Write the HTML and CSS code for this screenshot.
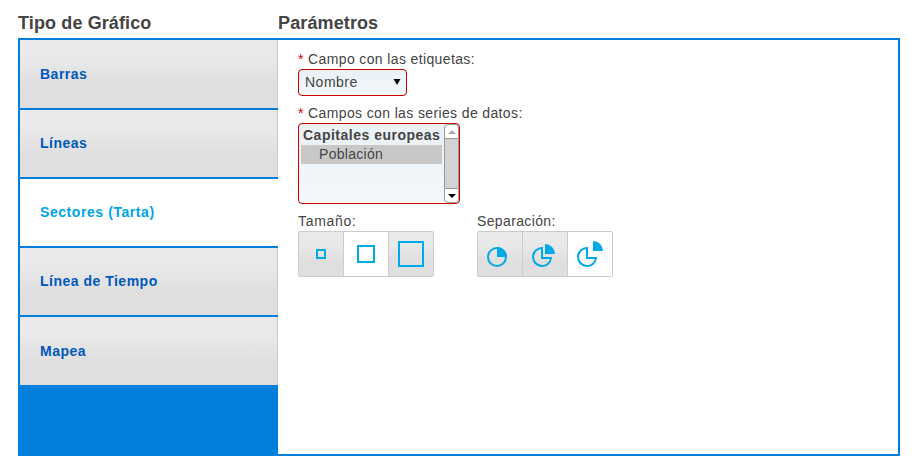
FILE: index.html
```html
<!DOCTYPE html>
<html lang="es">
<head>
<meta charset="utf-8">
<title>Tipo de Gráfico</title>
<link rel="stylesheet" href="styles.css">
</head>
<body>
<header class="headings">
  <h2>Tipo de Gráfico</h2>
  <h2>Parámetros</h2>
</header>
<main class="panel">
  <nav class="types">
    <a class="type type-tall">Barras</a>
    <a class="type">Líneas</a>
    <a class="type active">Sectores (Tarta)</a>
    <a class="type">Línea de Tiempo</a>
    <a class="type type-tall">Mapea</a>
  </nav>
  <section class="params">
    <div class="label"><span class="req">*</span> Campo con las etiquetas:</div>
    <div class="select"><span>Nombre</span><svg width="8" height="6" viewBox="0 0 8 6"><path d="M.5 0h7L4 6z"/></svg></div>
    <div class="label second"><span class="req">*</span> Campos con las series de datos:</div>
    <div class="listbox">
      <div class="options">
        <div class="group">Capitales europeas</div>
        <div class="option">Población</div>
      </div>
      <div class="scrollbar">
        <div class="arrow up"><svg width="8" height="4" viewBox="0 0 8 4"><path d="M0 4h8L4 0z" fill="#aaa"/></svg></div>
        <div class="track"></div>
        <div class="arrow down"><svg width="8" height="4" viewBox="0 0 8 4"><path d="M0 0h8L4 4z"/></svg></div>
      </div>
    </div>
    <div class="choices">
      <div class="choice">
        <div class="label size-label">Tamaño:</div>
        <div class="buttons">
          <span class="button"><i class="square small"></i></span>
          <span class="button on"><i class="square medium"></i></span>
          <span class="button"><i class="square large"></i></span>
        </div>
      </div>
      <div class="choice">
        <div class="label">Separación:</div>
        <div class="buttons">
          <span class="button"><svg class="pie" width="44" height="44" viewBox="0 0 44 44"><circle cx="19" cy="25" r="9"/><path class="wedge" d="M19 25V15a10 10 0 0 1 10 10z"/></svg></span>
          <span class="button"><svg class="pie" width="44" height="44" viewBox="0 0 44 44"><path d="M19 16a9 9 0 1 0 9 10H19z"/><path class="wedge" d="M22 22V12a10 10 0 0 1 10 10z"/></svg></span>
          <span class="button on"><svg class="pie" width="44" height="44" viewBox="0 0 44 44"><path d="M19 16a9 9 0 1 0 9 10H19z"/><path class="wedge" d="M25 19V9a10 10 0 0 1 10 10z"/></svg></span>
        </div>
      </div>
    </div>
  </section>
</main>
</body>
</html>
```
FILE: styles.css
```css
* { box-sizing: border-box; }
body {
  margin: 0;
  padding: 12px 20px 0 18px;
  background: #fff;
  color: #444;
  font: 14px/18px "Liberation Sans", Arial, sans-serif;
  letter-spacing: .5px;
}
.headings {
  display: grid;
  grid-template-columns: 260px 1fr;
  height: 26px;
}
h2 {
  margin: 0;
  font-size: 18px;
  line-height: 22px;
  letter-spacing: .12px;
}
.panel {
  display: flex;
  height: 418px;
  border: 2px solid #027fdb;
}
.types {
  display: flex;
  flex-direction: column;
  gap: 2px;
  width: 258px;
  background: #027fdb;
}
.type {
  display: flex;
  align-items: center;
  height: 67px;
  padding: 0 0 2px 20px;
  border-right: 1px solid #ccc;
  background: linear-gradient(#e9e9e9 28%, #dfdfdf 65%);
  color: #0058bd;
  font-weight: bold;
}
.type-tall { height: 68px; padding-bottom: 0; }
.type.active {
  border-color: #fff;
  background: #fff;
  color: #00a5e5;
  letter-spacing: .57px;
}
.params { padding: 10px 20px; }
.label { height: 19px; letter-spacing: .37px; }
.size-label { letter-spacing: .7px; }
.req { color: #d00000; }
.select {
  display: flex;
  align-items: center;
  justify-content: space-between;
  width: 109px;
  height: 27px;
  padding: 0 5px 2px 6px;
  border: 1px solid #cb0000;
  border-radius: 4px;
  background: linear-gradient(#e9f1f6, #f4f8fb);
}
.second { margin-top: 8px; }
.listbox {
  display: flex;
  width: 162px;
  height: 81px;
  border: 1px solid #cb0000;
  border-radius: 4px;
  background: linear-gradient(#e9f1f6, #f4f8fb);
}
.options { width: 145px; padding: 2px; }
.group { height: 19px; padding-left: 2px; font-weight: bold; white-space: nowrap; }
.option { height: 19px; padding-left: 18px; background: #c8c8c8; letter-spacing: .3px; }
.scrollbar {
  display: flex;
  flex-direction: column;
  width: 15px;
}
.arrow {
  display: flex;
  align-items: center;
  justify-content: center;
  height: 15px;
  border: 1px solid #999;
  background: #fff;
}
.up { border-radius: 4px 4px 0 0; }
.down { border-radius: 0 0 4px 4px; }
.track {
  flex: 1;
  border: solid #999;
  border-width: 0 1px;
  background: #d3d3d3;
}
.choices { display: flex; gap: 43px; margin-top: 8px; }
.buttons {
  display: flex;
  width: 136px;
  height: 46px;
  border: 1px solid #ccc;
  border-radius: 2px;
}
.button {
  display: flex;
  align-items: center;
  justify-content: center;
  width: 45px;
  height: 44px;
  border-right: 1px solid #ccc;
  background: linear-gradient(#e9e9e9 28%, #dfdfdf 65%);
}
.button:last-child { width: 44px; border-right: 0; }
.button.on { background: #fff; }
.square { border: 2px solid #00a9e8; }
.small { width: 10px; height: 10px; }
.medium { width: 18px; height: 18px; }
.large { width: 26px; height: 26px; }
.pie { fill: none; stroke: #00a9e8; stroke-width: 2; }
.wedge { fill: #00a9e8; stroke: none; }
```
